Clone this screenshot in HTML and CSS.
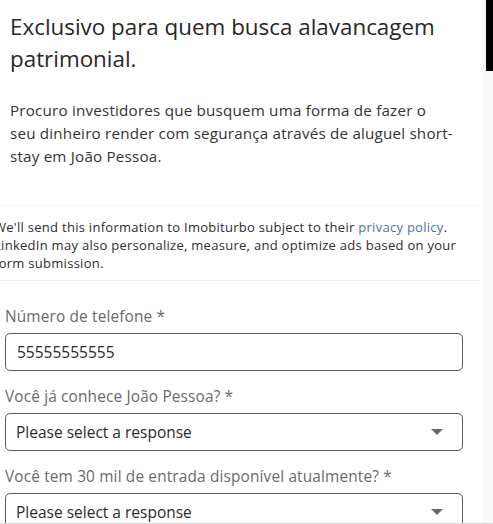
FILE: index.html
```html
<!DOCTYPE html>
<html lang="pt-BR">
<head>
    <meta charset="UTF-8">
    <meta name="viewport" content="width=device-width, initial-scale=1.0">
    <title>Imobiturbo - Formulário</title>
    <link rel="stylesheet" href="styles.css">
</head>
<body>
    <div class="sheet">
        <div class="intro">
            <h1>Exclusivo para quem busca alavancagem patrimonial.</h1>
            <p>Procuro investidores que busquem uma forma de fazer o<br>seu dinheiro render com segurança através de aluguel short-stay em João Pessoa.</p>
        </div>

        <div class="consent">
            We'll send this information to Imobiturbo subject to their <a href="#">privacy policy</a>.
            LinkedIn may also personalize, measure, and optimize ads based on your form submission.
        </div>

        <form class="lead-form">
            <div class="field">
                <label for="phone">Número de telefone *</label>
                <input type="text" id="phone" value="55555555555">
            </div>

            <div class="field">
                <label for="knows">Você já conhece João Pessoa? *</label>
                <div class="select-wrap">
                    <select id="knows">
                        <option>Please select a response</option>
                        <option>Sim</option>
                        <option>Não</option>
                    </select>
                </div>
            </div>

            <div class="field">
                <label for="budget">Você tem 30 mil de entrada disponível atualmente? *</label>
                <div class="select-wrap">
                    <select id="budget">
                        <option>Please select a response</option>
                        <option>Sim</option>
                        <option>Não</option>
                    </select>
                </div>
            </div>
        </form>
    </div>
    <div class="scroll-thumb"></div>
    <div class="footer-edge"></div>
</body>
</html>
```

FILE: styles.css
```css
html, body {
    margin: 0;
    height: 100%;
    overflow: hidden;
}
body {
    font-family: "Open Sans", "Noto Sans", sans-serif;
    background: #f8f8f7;
    color: #2b2b2b;
}
.sheet {
    width: 482px;
    background: #fff;
    min-height: 100%;
}
.intro {
    padding: 11px 10px 37px 10px;
}
h1 {
    margin: 0;
    font-size: 22.4px;
    font-weight: 400;
    line-height: 32px;
    color: #282828;
}
.intro p {
    margin: 24px 0 0;
    font-size: 15.2px;
    line-height: 23px;
    letter-spacing: 0.2px;
    color: #333;
}
.consent {
    margin-left: -6px;
    width: 486px;
    padding: 12px 0 8px;
    border-top: 1px solid #efefef;
    border-bottom: 1px solid #efefef;
    font-size: 13px;
    line-height: 18px;
    letter-spacing: 0.28px;
    color: #2d2d2d;
}
.consent a {
    color: #4674b3;
    text-decoration: none;
}
.lead-form {
    padding: 26px 19px 0 5px;
}
.field {
    margin-bottom: 16px;
}
.field label {
    display: block;
    margin-bottom: 6px;
    font-size: 15.4px;
    line-height: 20px;
    letter-spacing: 0.15px;
    color: #6a6a6a;
}
input, select {
    box-sizing: border-box;
    width: 100%;
    height: 38px;
    padding: 0 11px;
    border: 1px solid #5e5e5e;
    border-radius: 5px;
    background: #fff;
    font-family: inherit;
    font-size: 15.5px;
    color: #2b2b2b;
}
select {
    appearance: none;
    -webkit-appearance: none;
    padding-left: 10px;
}
.select-wrap {
    position: relative;
}
/* dropdown caret */
.select-wrap::after {
    content: "";
    position: absolute;
    right: 20px;
    top: 16px;
    border-left: 6.5px solid transparent;
    border-right: 6.5px solid transparent;
    border-top: 6px solid #6a6a6a;
    pointer-events: none;
}
.scroll-thumb {
    position: fixed;
    top: 0;
    right: 0;
    width: 7px;
    height: 71px;
    background: #000;
}
.footer-edge {
    position: fixed;
    left: 0;
    right: 0;
    bottom: 0;
    height: 1px;
    background: #d9d9d9;
}
```
